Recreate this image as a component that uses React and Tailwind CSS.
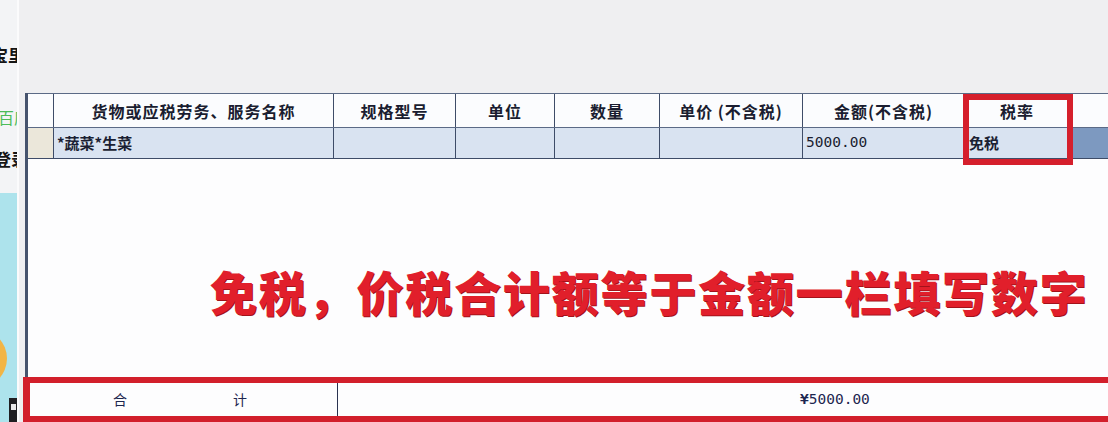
import React from "react";

const cjk = { fontFamily: '"Noto Sans CJK SC", "Noto Sans", sans-serif' };
const mono = { fontFamily: '"DejaVu Sans Mono", "Liberation Mono", monospace' };

const heads = [
  "",
  "货物或应税劳务、服务名称",
  "规格型号",
  "单位",
  "数量",
  "单价 (不含税)",
  "金额(不含税)",
  "税率",
  "",
];

export default function App() {
  return (
    <div
      className="w-[1108px] h-[422px] flex overflow-hidden bg-[#efeff1] text-[#1b1f33]"
      style={cjk}
    >
      {/* side strip */}
      <div className="w-[19px] shrink-0 flex flex-col border-r-2 border-[#fbfbfc] overflow-hidden">
        <div className="h-[193px] bg-[#f3f4f6] flex flex-col overflow-hidden">
          <div className="mt-[44px] h-[22px] overflow-hidden whitespace-nowrap">
            <span className="block -ml-[9px] text-[17px] leading-[22px] font-bold text-[#151515]">宝里</span>
          </div>
          <div className="mt-[40px] h-[22px] overflow-hidden whitespace-nowrap">
            <span className="block -ml-[2px] text-[16px] leading-[22px] text-[#4cbc58]">百度</span>
          </div>
          <div className="mt-[20px] h-[22px] overflow-hidden whitespace-nowrap">
            <span className="block -ml-[6px] text-[17px] leading-[22px] font-bold text-[#151515]">登录</span>
          </div>
        </div>
        <div className="flex-1 bg-[#ade3ec] flex flex-col overflow-hidden">
          <div className="mt-[136px] w-[60px] h-[60px] -ml-[53px] rounded-full bg-[#f2b545]" />
          <div className="mt-[10px] ml-[9px] w-[9px] h-[24px] bg-[#1f1f22] flex flex-col items-center pt-[6px]">
            <div className="w-[5px] h-[6px] bg-[#e8e8e8]" />
          </div>
        </div>
      </div>

      {/* main */}
      <div className="flex-1 flex flex-col pl-[4px]">
        <div className="h-[93px] shrink-0" />

        <div className="relative ml-[2px] h-[284px] shrink-0 border-l-[3px] border-[#46536d] bg-[#fdfdfe] flex flex-col">
          {/* header row */}
          <div className="grid grid-cols-[26px_280px_122px_99px_105px_143px_162px_105px_38px] h-[35px] border-t border-b border-[#5b6a86] bg-[#fbfcfe]">
            {heads.map((h, i) => (
              <div
                key={i}
                className={
                  "flex items-center justify-center text-[16px] font-semibold tracking-[1px] text-[#1a1d30] whitespace-pre " +
                  (i < 8 ? "border-r border-[#3e4c68]" : "")
                }
              >
                {h}
              </div>
            ))}
          </div>
          {/* data row */}
          <div className="grid grid-cols-[26px_280px_122px_99px_105px_143px_162px_105px_38px] h-[31px] border-b border-[#3e4c68] bg-[#d9e3f1]">
            <div className="border-r border-[#3e4c68] bg-[#ebe7da]" />
            <div className="border-r border-[#3e4c68] flex items-center pl-[3px] text-[15px] font-semibold">
              *蔬菜*生菜
            </div>
            <div className="border-r border-[#3e4c68]" />
            <div className="border-r border-[#3e4c68]" />
            <div className="border-r border-[#3e4c68]" />
            <div className="border-r border-[#3e4c68]" />
            <div className="border-r border-[#3e4c68] flex items-center pl-[3px] text-[14.5px] text-[#1a1d30]" style={mono}>
              5000.00
            </div>
            <div className="border-r border-[#3e4c68] flex items-center pl-[4px] text-[15px] font-semibold">
              免税
            </div>
            <div className="bg-[#7d99c0]" />
          </div>

          {/* body */}
          <div className="flex-1 pt-[108px] pl-[182px]">
            <div
              className="text-[47px] leading-none font-extrabold tracking-[1.8px] text-[#e11f2b] whitespace-nowrap [text-shadow:1px_1px_0_#a3121b]"
            >
              免税，价税合计额等于金额一栏填写数字
            </div>
          </div>

          {/* annotation box on 税率 */}
          <div className="absolute left-[935px] top-[1px] w-[110px] h-[71px] border-[6px] border-[#d51f2c]" />
        </div>

        {/* total row */}
        <div className="h-[45px] shrink-0 border-t-[6px] border-b-[6px] border-l-[7px] border-[#d21f2b] bg-[#fdfdfe] flex">
          <div className="w-[308px] shrink-0 border-r border-[#2a3350] flex items-center text-[14px] text-[#1d2650]">
            <span className="ml-[83px]">合</span>
            <span className="ml-[106px]">计</span>
          </div>
          <div className="flex-1 flex items-center pl-[462px] text-[14.5px] text-[#1d2650]" style={mono}>
            <span className="font-bold">¥</span>5000.00
          </div>
        </div>
      </div>
    </div>
  );
}
